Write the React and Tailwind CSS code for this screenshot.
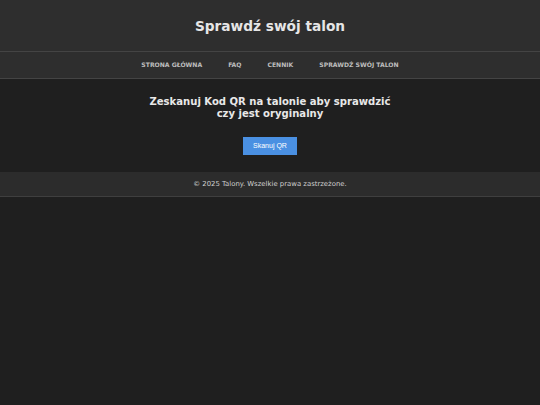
export default function App() {
  const font = { fontFamily: '"DejaVu Sans", Verdana, sans-serif' };
  return (
    <div className="min-h-[405px] w-full bg-[#1f1f1f] text-[#e0e0e0]" style={font}>
      <header className="h-[52px] bg-[#2e2e2e] border-b border-[#444] flex items-center justify-center pt-[2px]">
        <h1 className="text-[13.7px] font-bold text-[#e6e6e6] leading-none">Sprawdź swój talon</h1>
      </header>
      <nav className="h-[27px] bg-[#2e2e2e] border-b border-[#444] flex items-center justify-center gap-[26px] text-[6.1px] font-bold text-[#bdbdbd] uppercase">
        <span>Strona Główna</span>
        <span>FAQ</span>
        <span>Cennik</span>
        <span>Sprawdź swój talon</span>
      </nav>
      <main className="h-[93px] bg-[#1f1f1f] flex flex-col items-center pt-[17px]">
        <h2
          className="text-[11.2px] font-bold text-[#e8e8e8] text-center leading-[12px]"
          style={{ fontFamily: '"DejaVu Sans Condensed", "DejaVu Sans", sans-serif' }}
        >
          Zeskanuj Kod QR na talonie aby sprawdzić
          <br />
          czy jest oryginalny
        </h2>
        <button
          className="mt-[17px] w-[54px] h-[18px] bg-[#4a90e2] text-white text-[7px] flex items-center justify-center"
          style={{ fontFamily: '"Liberation Sans", Arial, sans-serif' }}
        >
          Skanuj QR
        </button>
      </main>
      <footer className="h-[25px] bg-[#2c2c2c] border-b border-[#3f3f3f] flex items-center justify-center text-[6.9px] text-[#cfcfcf]">
        © 2025 Talony. Wszelkie prawa zastrzeżone.
      </footer>
    </div>
  );
}
